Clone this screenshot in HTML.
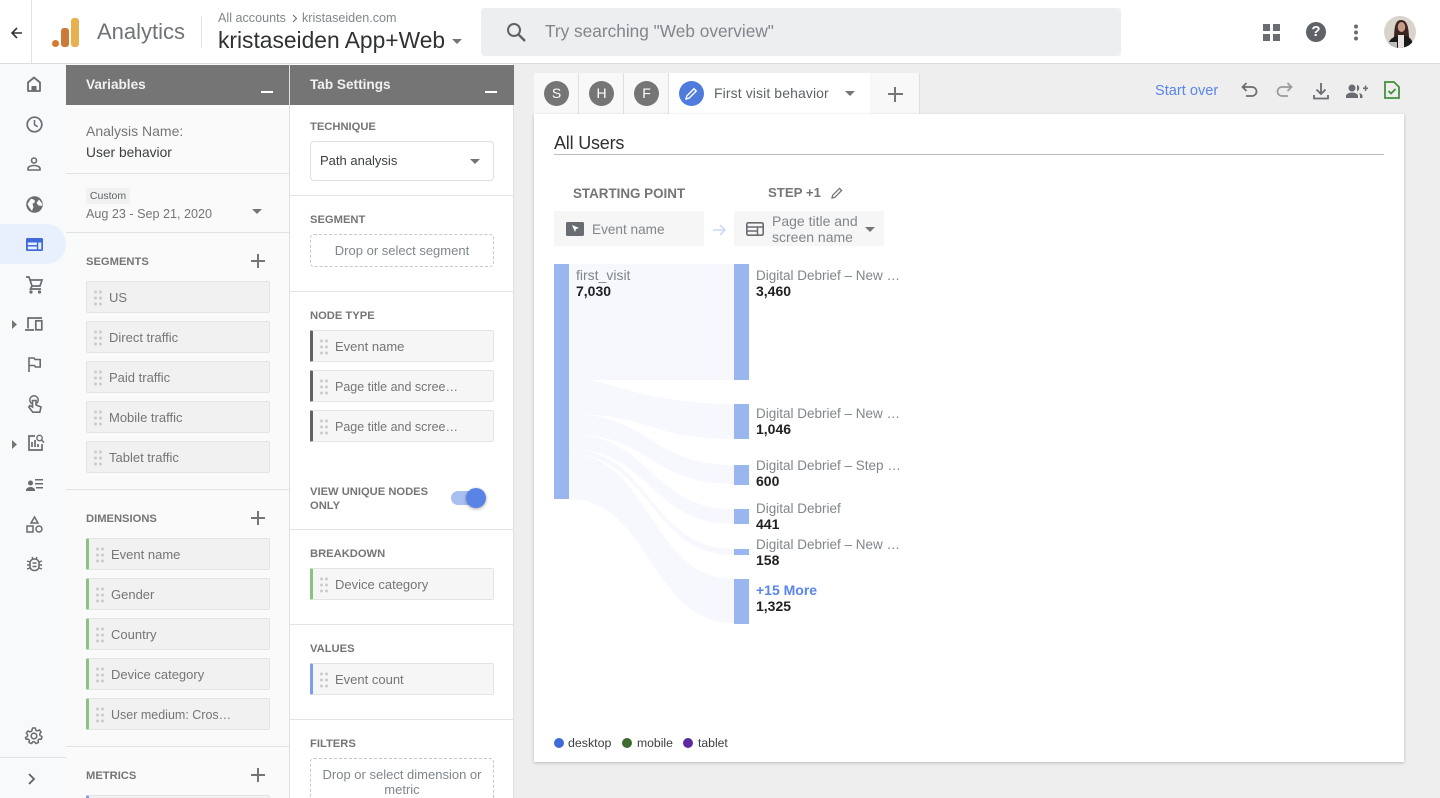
<!DOCTYPE html>
<html><head><meta charset="utf-8"><style>
*{box-sizing:border-box}
html,body{margin:0;padding:0;width:1440px;height:798px;overflow:hidden;background:#eee;font-family:"Liberation Sans",sans-serif;color:#757575}
#root{position:relative;width:1440px;height:798px;overflow:hidden;background:#eee}
.a{position:absolute;white-space:nowrap}
.t{position:absolute;white-space:nowrap;font-size:14px;line-height:16px}
.lab{position:absolute;white-space:nowrap;font-size:11.2px;line-height:14px;font-weight:700;color:#757575;margin-top:1px}
.chip{position:absolute;width:184px;height:32px;background:#f1f1f1;border:1px solid #e4e4e4;border-radius:2px;font-size:13px;line-height:32px;color:#757575;padding-left:22px;white-space:nowrap}
.chip.w{background:#f6f6f6}
.chip.e{font-size:12.5px}
.chip i{position:absolute;left:7px;top:7px;width:8px;height:17px;background-image:radial-gradient(circle,#cdcdcd 1.4px,transparent 1.7px);background-size:5px 6px;background-position:-1px 0}
.chip.g,.chip.d,.chip.b{border-left:3px solid #8bc27f;padding-left:22px}
.chip.d{border-left-color:#5f6368}
.chip.b{border-left-color:#7c9df0}
.hr{position:absolute;height:1px;background:#e3e3e3}
svg{position:absolute;overflow:visible}
.plus{position:absolute;width:14px;height:14px}
.plus:before,.plus:after{content:"";position:absolute;background:#757575}
.plus:before{left:0;right:0;top:6px;height:2px}
.plus:after{top:0;bottom:0;left:6px;width:2px}
.car{position:absolute;width:0;height:0;border-left:5px solid transparent;border-right:5px solid transparent;border-top:5px solid #757575}
.tab{position:absolute;top:73px;height:41px;background:#f8f8f8;border-right:1px solid #e0e0e0}
.circ{position:absolute;top:81px;width:25px;height:25px;border-radius:50%;background:#757575;color:#fff;font-size:14px;line-height:25px;text-align:center}
.nm{position:absolute;left:756px;font-size:13.5px;line-height:16px;color:#80868b;white-space:nowrap;margin-top:1px}
.v{position:absolute;left:756px;font-size:14px;line-height:16px;font-weight:700;color:#212121;white-space:nowrap}
.dot{position:absolute;top:738px;width:10px;height:10px;border-radius:50%}
</style></head><body><div id="root">

<!-- header -->
<div class="a" style="left:0;top:0;width:1440px;height:64px;background:#fff;border-bottom:1px solid #dcdcdc"></div>
<div class="a" style="left:31px;top:0;width:1px;height:63px;background:#e2e2e2"></div>
<svg style="left:10px;top:26px" width="14" height="14" viewBox="0 0 14 14"><path d="M12 7H2.500M7 2L2 7l5 5" fill="none" stroke="#333" stroke-width="1.600"/></svg>
<svg style="left:52px;top:18px" width="27" height="29" viewBox="0 0 27 29"><circle cx="3.500" cy="25.500" r="3.500" fill="#d9772e"/><rect x="9" y="10" width="8" height="19" rx="3" fill="#cc7a38"/><rect x="19" y="0" width="8" height="29" rx="3" fill="#e9b04f"/></svg>
<div class="a" style="left:97px;top:18px;font-size:22px;line-height:28px;color:#6f7378">Analytics</div>
<div class="a" style="left:201px;top:16px;width:1px;height:32px;background:#e2e2e2"></div>
<div class="a" style="left:218px;top:11px;font-size:12.6px;line-height:14px;color:#80868b">All accounts</div>
<svg style="left:291px;top:14px" width="8" height="9" viewBox="0 0 8 9"><path d="M2 1l3.500 3.500L2 8" fill="none" stroke="#757575" stroke-width="1.200"/></svg>
<div class="a" style="left:302px;top:11px;font-size:12.6px;line-height:14px;color:#80868b">kristaseiden.com</div>
<div class="a" style="left:218px;top:27px;font-size:22.8px;line-height:26px;color:#2f3133">kristaseiden App+Web</div>
<div class="car" style="left:452px;top:39px"></div>

<div class="a" style="left:481px;top:8px;width:640px;height:48px;background:#eceef0;border-radius:4px"></div>
<svg style="left:505px;top:21px" width="22" height="22" viewBox="0 0 22 22"><circle cx="9" cy="9" r="6" fill="none" stroke="#5f6368" stroke-width="2"/><path d="M13.500 13.500L20 20" stroke="#5f6368" stroke-width="2.400"/></svg>
<div class="a" style="left:545px;top:21px;font-size:17.25px;line-height:20px;color:#80868b">Try searching "Web overview"</div>

<svg style="left:1263px;top:24px" width="17" height="17" viewBox="0 0 17 17" fill="#696c70"><rect width="7" height="7"/><rect x="10" width="7" height="7"/><rect y="10" width="7" height="7"/><rect x="10" y="10" width="7" height="7"/></svg>
<div class="a" style="left:1306px;top:22px;width:20px;height:20px;border-radius:50%;background:#5f6368;color:#fff;font-weight:700;font-size:15px;line-height:20px;text-align:center">?</div>
<svg style="left:1353px;top:24px" width="6" height="17" viewBox="0 0 6 17" fill="#696c70"><circle cx="3" cy="2.500" r="2"/><circle cx="3" cy="8.500" r="2"/><circle cx="3" cy="14.500" r="2"/></svg>
<svg style="left:1384px;top:16px" width="32" height="32" viewBox="0 0 32 32"><defs><clipPath id="c"><circle cx="16" cy="16" r="16"/></clipPath></defs><g clip-path="url(#c)"><rect width="32" height="32" fill="#d9d3cc"/><path d="M10 25C10 12 11 4 17 4s8 7 8 20z" fill="#3a2420"/><ellipse cx="17.500" cy="11" rx="3.800" ry="5" fill="#c99b87"/><path d="M4 32c0-8 4-11 10-12h7c6 1 8 5 8 12z" fill="#1d1a1b"/><path d="M14 19h6v13h-6z" fill="#e8e2e0"/><path d="M4 26h9v6H4z" fill="#bdbdbd"/></g></svg>

<!-- left nav -->
<div class="a" style="left:0;top:64px;width:66px;height:734px;background:#f8f9fb"></div>
<div class="a" style="left:0;top:224px;width:66px;height:40px;background:#e8effd;border-radius:0 20px 20px 0"></div>
<div class="a" style="left:0;top:757px;width:66px;height:1px;background:#e3e3e3"></div>

<svg style="left:26px;top:76px" width="16" height="16" viewBox="0 0 16 16"><path d="M2 15V6.500L8 1.500l6 5V15z" fill="none" stroke="#696c70" stroke-width="1.800" stroke-linejoin="round"/><path d="M5.500 15v-5h5v5z" fill="#696c70"/></svg>
<svg style="left:26px;top:116px" width="17" height="17" viewBox="0 0 17 17"><circle cx="8.500" cy="8.500" r="7.300" fill="none" stroke="#696c70" stroke-width="1.700"/><path d="M8.500 4v4.800l3.200 2" fill="none" stroke="#696c70" stroke-width="1.500"/></svg>
<svg style="left:27px;top:157px" width="14" height="14" viewBox="0 0 14 14"><circle cx="7" cy="3.500" r="2.500" fill="none" stroke="#696c70" stroke-width="1.600"/><path d="M1 13v-1.500c0-2 3.500-3 6-3s6 1 6 3V13z" fill="none" stroke="#696c70" stroke-width="1.600"/></svg>
<svg style="left:26px;top:196px" width="17" height="17" viewBox="0 0 17 17"><circle cx="8.500" cy="8.500" r="8.300" fill="#696c70"/><path d="M5 2.500l3.500 1.500L9 6 6.500 8l1 3L6 15 3 11 1.500 8zM13 3.500L10.500 7l2 2.500 3 .5 1-2z" fill="#f8f9fb"/></svg>
<svg style="left:26px;top:238px" width="17" height="13" viewBox="0 0 17 13"><rect width="17" height="13" rx="1.500" fill="#3f6ad8"/><rect x="1.800" y="4.500" width="9" height="2.500" fill="#e8effd"/><rect x="1.800" y="8.500" width="9" height="2.800" fill="#e8effd"/><rect x="12.300" y="4.500" width="3" height="6.800" fill="#e8effd"/></svg>
<svg style="left:25px;top:276px" width="18" height="18" viewBox="0 0 18 18"><path d="M1 1h3l3 9h8l2-6H5" fill="none" stroke="#696c70" stroke-width="1.700"/><path d="M7 10l-1.500 3H16" fill="none" stroke="#696c70" stroke-width="1.700"/><circle cx="6" cy="16" r="1.600" fill="#696c70"/><circle cx="14.500" cy="16" r="1.600" fill="#696c70"/></svg>
<svg style="left:12px;top:320px" width="5" height="9" viewBox="0 0 5 9"><path d="M0 0l5 4.500L0 9z" fill="#757575"/></svg>
<svg style="left:25px;top:317px" width="18" height="14" viewBox="0 0 18 14"><path d="M3 11.500V1h14M0 13h9" fill="none" stroke="#696c70" stroke-width="1.700"/><rect x="10.800" y="3.800" width="6" height="9" fill="none" stroke="#696c70" stroke-width="1.700"/></svg>
<svg style="left:28px;top:357px" width="13" height="15" viewBox="0 0 13 15"><path d="M1 15V1h5l1 1.500h5.200v7.500H7.500l-1-1.500H1" fill="none" stroke="#696c70" stroke-width="1.600"/></svg>
<svg style="left:28px;top:395px" width="14" height="18" viewBox="0 0 14 18"><circle cx="6" cy="5" r="4.200" fill="none" stroke="#696c70" stroke-width="1.500"/><path d="M4.500 5.500v6.500L2 10.500.8 12l4 5.200h7l1.200-5.200-5-2V5.500z" fill="#f8f9fb" stroke="#696c70" stroke-width="1.600"/></svg>
<svg style="left:12px;top:440px" width="5" height="9" viewBox="0 0 5 9"><path d="M0 0l5 4.500L0 9z" fill="#757575"/></svg>
<svg style="left:27px;top:434px" width="18" height="18" viewBox="0 0 18 18"><path d="M8 2H2v14h13v-6" fill="none" stroke="#696c70" stroke-width="1.700"/><path d="M5 13V8M8 13V6M11 13v-3" stroke="#696c70" stroke-width="1.700"/><circle cx="12.500" cy="4" r="2.700" fill="none" stroke="#696c70" stroke-width="1.400"/><path d="M14.500 6l2.500 2.500" stroke="#696c70" stroke-width="1.500"/></svg>
<svg style="left:26px;top:478px" width="17" height="13" viewBox="0 0 17 13" fill="#696c70"><circle cx="4.500" cy="5" r="2.500"/><path d="M0 13v-1c0-2 3-3 4.500-3S9 10 9 12v1z"/><path d="M9 1h8v1.500H9zM9 5h8v1.500H9zM10 9h7v1.500h-7z"/></svg>
<svg style="left:26px;top:516px" width="17" height="17" viewBox="0 0 17 17"><path d="M8.500 1L12 7H5z" fill="none" stroke="#696c70" stroke-width="1.500"/><rect x="1" y="10" width="6" height="6" fill="none" stroke="#696c70" stroke-width="1.500"/><circle cx="13" cy="13" r="3" fill="none" stroke="#696c70" stroke-width="1.500"/></svg>
<svg style="left:27px;top:556px" width="15" height="16" viewBox="0 0 15 16"><rect x="3" y="3" width="9" height="11.500" rx="4" fill="none" stroke="#696c70" stroke-width="1.600"/><path d="M0 5l3 1M15 5l-3 1M0 9h3M15 9h-3M0 13l3-1M15 13l-3-1M5 1l1 2M10 1L9 3M5.500 7h4M5.500 10.500h4" stroke="#696c70" stroke-width="1.400"/></svg>
<svg style="left:25px;top:727px" width="18" height="18" viewBox="0 0 18 18"><circle cx="9" cy="9" r="2.800" fill="none" stroke="#696c70" stroke-width="1.600"/><path d="M7.600 1h2.800l.4 2.200 1.500.7 2-1 1.800 2.200-1.400 1.700.3 1.700 2 1-.7 2.700-2.200-.1-1.100 1.300.4 2.200-2.600 1-1.300-1.800h-1.600l-1.300 1.800-2.600-1 .4-2.200-1.100-1.300-2.200.1L.4 10.500l2-1 .3-1.700L1.300 6.100l1.800-2.200 2 1 1.500-.7z" fill="none" stroke="#696c70" stroke-width="1.500" stroke-linejoin="round"/></svg>
<svg style="left:28px;top:773px" width="8" height="12" viewBox="0 0 8 12"><path d="M1 1l5 5-5 5" fill="none" stroke="#5f6368" stroke-width="1.800"/></svg>

<!-- variables panel -->
<div class="a" style="left:66px;top:64px;width:224px;height:734px;background:#fafafa;border-right:1px solid #e0e0e0"></div>
<div class="a" style="left:66px;top:65px;width:223px;height:40px;background:#757575;color:#f1f1f1;font-size:13.6px;font-weight:700;line-height:39px;padding-left:20px">Variables</div>
<div class="a" style="left:261px;top:91px;width:12px;height:2px;background:#fff"></div>
<div class="t" style="left:86px;top:123px;color:#757575">Analysis Name:</div>
<div class="t" style="left:86px;top:145px;color:#3c4043;font-size:13.8px">User behavior</div>
<div class="hr" style="left:66px;top:173px;width:223px"></div>
<div class="a" style="left:86px;top:188px;width:44px;height:16px;background:#f1f1f1;font-size:10.5px;line-height:16px;color:#5f6368;text-align:center">Custom</div>
<div class="t" style="left:86px;top:206px;color:#757575;font-size:12.6px">Aug 23 - Sep 21, 2020</div>
<div class="car" style="left:252px;top:209px"></div>
<div class="hr" style="left:66px;top:232px;width:223px"></div>
<div class="lab" style="left:86px;top:254px">SEGMENTS</div>
<div class="plus" style="left:251px;top:254px"></div>
<div class="chip" style="left:86px;top:281px"><i></i>US</div>
<div class="chip" style="left:86px;top:321px"><i></i>Direct traffic</div>
<div class="chip" style="left:86px;top:361px"><i></i>Paid traffic</div>
<div class="chip" style="left:86px;top:401px"><i></i>Mobile traffic</div>
<div class="chip" style="left:86px;top:441px"><i></i>Tablet traffic</div>
<div class="hr" style="left:66px;top:489px;width:223px"></div>
<div class="lab" style="left:86px;top:511px">DIMENSIONS</div>
<div class="plus" style="left:251px;top:511px"></div>
<div class="chip g" style="left:86px;top:538px"><i></i>Event name</div>
<div class="chip g" style="left:86px;top:578px"><i></i>Gender</div>
<div class="chip g" style="left:86px;top:618px"><i></i>Country</div>
<div class="chip g" style="left:86px;top:658px"><i></i>Device category</div>
<div class="chip g e" style="left:86px;top:698px"><i></i>User medium: Cros…</div>
<div class="hr" style="left:66px;top:746px;width:223px"></div>
<div class="lab" style="left:86px;top:768px">METRICS</div>
<div class="plus" style="left:251px;top:768px"></div>
<div class="chip b" style="left:86px;top:795px"></div>

<!-- tab settings panel -->
<div class="a" style="left:290px;top:64px;width:224px;height:734px;background:#fff;border-right:1px solid #e0e0e0"></div>
<div class="a" style="left:290px;top:65px;width:224px;height:40px;background:#757575;color:#f1f1f1;font-size:13.6px;font-weight:700;line-height:39px;padding-left:20px">Tab Settings</div>
<div class="a" style="left:485px;top:91px;width:12px;height:2px;background:#fff"></div>
<div class="lab" style="left:310px;top:119px">TECHNIQUE</div>
<div class="a" style="left:310px;top:141px;width:184px;height:40px;border:1px solid #e0e0e0;border-radius:4px;font-size:13px;line-height:37px;padding-left:9px;color:#3c4043">Path analysis</div>
<div class="car" style="left:470px;top:159px"></div>
<div class="hr" style="left:290px;top:195px;width:223px"></div>
<div class="lab" style="left:310px;top:212px">SEGMENT</div>
<div class="a" style="left:310px;top:234px;width:184px;height:33px;border:1px dashed #c8c8c8;border-radius:4px;font-size:13px;line-height:31px;text-align:center;color:#80868b">Drop or select segment</div>
<div class="hr" style="left:290px;top:291px;width:223px"></div>
<div class="lab" style="left:310px;top:308px">NODE TYPE</div>
<div class="chip w d" style="left:310px;top:330px"><i></i>Event name</div>
<div class="chip w d e" style="left:310px;top:370px"><i></i>Page title and scree…</div>
<div class="chip w d e" style="left:310px;top:410px"><i></i>Page title and scree…</div>
<div class="lab" style="left:310px;top:484px">VIEW UNIQUE NODES</div>
<div class="lab" style="left:310px;top:498px">ONLY</div>
<div class="a" style="left:451px;top:491px;width:34px;height:14px;border-radius:7px;background:#a9bff2"></div>
<div class="a" style="left:466px;top:488px;width:20px;height:20px;border-radius:50%;background:#5a83e6;box-shadow:0 1px 3px rgba(0,0,0,.35)"></div>
<div class="hr" style="left:290px;top:529px;width:223px"></div>
<div class="lab" style="left:310px;top:546px">BREAKDOWN</div>
<div class="chip w g" style="left:310px;top:568px"><i></i>Device category</div>
<div class="hr" style="left:290px;top:624px;width:223px"></div>
<div class="lab" style="left:310px;top:641px">VALUES</div>
<div class="chip w b" style="left:310px;top:663px"><i></i>Event count</div>
<div class="hr" style="left:290px;top:719px;width:223px"></div>
<div class="lab" style="left:310px;top:736px">FILTERS</div>
<div class="a" style="left:310px;top:758px;width:184px;height:60px;border:1px dashed #c8c8c8;border-radius:4px;font-size:13px;line-height:15px;text-align:center;color:#80868b;padding-top:8px;white-space:normal">Drop or select dimension or metric</div>

<!-- tabs -->
<div class="tab" style="left:534px;width:45px"></div>
<div class="tab" style="left:579px;width:45px"></div>
<div class="tab" style="left:624px;width:45px"></div>
<div class="tab" style="left:870px;width:50px"></div>
<div class="circ" style="left:544px">S</div>
<div class="circ" style="left:589px">H</div>
<div class="circ" style="left:634px">F</div>
<div class="a" style="left:669px;top:73px;width:201px;height:42px;background:#fff"></div>
<div class="circ" style="left:679px;background:#4f7bdc"></div>
<svg style="left:685px;top:87px" width="13" height="13" viewBox="0 0 13 13"><path d="M1 12l.8-3L9 1.800 11.200 4 4 11.200z" fill="none" stroke="#fff" stroke-width="1.400"/></svg>
<div class="a" style="left:714px;top:85px;font-size:14px;line-height:16px;font-weight:400;color:#5f6368;letter-spacing:.1px">First visit behavior</div>
<div class="car" style="left:845px;top:91px"></div>
<div class="plus" style="left:888px;top:87px;width:15px;height:15px"></div>

<!-- toolbar -->
<div class="a" style="left:1155px;top:83px;font-size:14.6px;line-height:16px;color:#5a85ea">Start over</div>
<svg style="left:1241px;top:82px" width="17" height="16" viewBox="0 0 17 16"><path d="M5.500 1L1.500 5l4 4M2 5h9a4.500 4.500 0 0 1 0 9H5" fill="none" stroke="#696c70" stroke-width="1.700"/></svg>
<svg style="left:1276px;top:82px" width="17" height="16" viewBox="0 0 17 16"><path d="M11.500 1l4 4-4 4M15 5H6a4.500 4.500 0 0 0 0 9h6" fill="none" stroke="#9a9a9a" stroke-width="1.700"/></svg>
<svg style="left:1313px;top:83px" width="16" height="17" viewBox="0 0 16 17"><path d="M8 0v11M3.500 6.500L8 11l4.500-4.500M1 12v3.500h14V12" fill="none" stroke="#696c70" stroke-width="1.800"/></svg>
<svg style="left:1346px;top:84px" width="22" height="14" viewBox="0 0 22 14" fill="#696c70"><circle cx="6" cy="4" r="3.500"/><path d="M0 14v-2c0-2 3-3.500 6-3.500s6 1.500 6 3.500v2z"/><path d="M11 .8a3.500 3.500 0 0 1 0 6.500zM13 9c2 .5 3.500 1.500 3.500 3v2H14v-2c0-1-.3-2-1-3z"/><path d="M17 3.500h5v1.500h-5zM18.800 1.500h1.500v5.500h-1.500z"/></svg>
<svg style="left:1384px;top:81px" width="16" height="18" viewBox="0 0 16 18"><path d="M1 1h9l5 5v11H1z" fill="none" stroke="#43903f" stroke-width="1.800"/><path d="M4.500 10l2.500 2.500 4.500-4.500" fill="none" stroke="#43903f" stroke-width="1.800"/></svg>

<!-- card -->
<div class="a" style="left:534px;top:114px;width:870px;height:648px;background:#fff;box-shadow:0 1px 3px rgba(0,0,0,.22)"></div>
<div class="a" style="left:554px;top:132px;font-size:18px;line-height:22px;color:#2f3133;letter-spacing:-.2px">All Users</div>
<div class="a" style="left:554px;top:154px;width:830px;height:1px;background:#bdbdbd"></div>
<div class="a" style="left:573px;top:186px;font-size:13.4px;line-height:16px;font-weight:700;color:#757575">STARTING POINT</div>
<div class="a" style="left:768px;top:185px;font-size:13.2px;line-height:16px;font-weight:700;color:#757575">STEP +1</div>
<svg style="left:831px;top:187px" width="12" height="12" viewBox="0 0 12 12"><path d="M1 11l.6-2.700L8.500 1.400 10.600 3.500 3.700 10.400z" fill="none" stroke="#757575" stroke-width="1.300"/></svg>
<div class="a" style="left:554px;top:211px;width:150px;height:35px;background:#f6f6f6"></div>
<svg style="left:566px;top:222px" width="18" height="14" viewBox="0 0 18 14"><rect width="18" height="14" rx="1.500" fill="#696c70"/><path d="M6 3l7 3-3 1-1 3z" fill="#fff"/></svg>
<div class="t" style="left:592px;top:222px;color:#80868b;font-size:13.6px">Event name</div>
<svg style="left:713px;top:224px" width="13" height="12" viewBox="0 0 13 12"><path d="M0 6h11.500M7 1l5 5-5 5" fill="none" stroke="#c9d7f8" stroke-width="1.500"/></svg>
<div class="a" style="left:734px;top:211px;width:150px;height:35px;background:#f6f6f6"></div>
<svg style="left:746px;top:222px" width="18" height="14" viewBox="0 0 18 14"><rect x=".8" y=".8" width="16.400" height="12.400" rx="1.500" fill="none" stroke="#696c70" stroke-width="1.600"/><path d="M1 5h16M1 9h10M11.500 5v8" stroke="#696c70" stroke-width="1.500" fill="none"/></svg>
<div class="t" style="left:772px;top:213px;color:#80868b">Page title and</div>
<div class="t" style="left:772px;top:229px;color:#80868b">screen name</div>
<div class="car" style="left:865px;top:227px"></div>

<!-- sankey -->
<svg style="left:0;top:0" width="1440" height="798" viewBox="0 0 1440 798">
<g fill="#f6f8fe">
<path d="M569 264H734V380H569z"/>
<path d="M569 378C610 378 640 404 734 404V439C650 439 650 414 569 414z"/>
<path d="M569 414C650 414 650 465 734 465V484C650 484 650 434 569 434z"/>
<path d="M569 434C650 434 650 509 734 509V524C650 524 650 449 569 449z"/>
<path d="M569 449C650 449 650 549 734 549V555C650 555 650 454 569 454z"/>
<path d="M569 454C650 454 650 579 734 579V623C650 623 650 499 569 499z"/>
</g>
<g fill="#9ab6ee">
<rect x="554" y="264" width="15" height="235"/>
<rect x="734" y="264" width="15" height="116"/>
<rect x="734" y="404" width="15" height="35"/>
<rect x="734" y="465" width="15" height="20"/>
<rect x="734" y="509" width="15" height="15"/>
<rect x="734" y="549" width="15" height="6"/>
<rect x="734" y="579" width="15" height="45"/>
</g>
</svg>
<div class="t" style="left:576px;top:267px;color:#80868b">first_visit</div>
<div class="t" style="left:576px;top:283px;color:#212121;font-weight:700">7,030</div>
<div class="nm" style="top:267px">Digital Debrief – New …</div><div class="v" style="top:283px">3,460</div>
<div class="nm" style="top:405px">Digital Debrief – New …</div><div class="v" style="top:421px">1,046</div>
<div class="nm" style="top:457px">Digital Debrief – Step …</div><div class="v" style="top:473px">600</div>
<div class="nm" style="top:500px">Digital Debrief</div><div class="v" style="top:516px">441</div>
<div class="nm" style="top:536px">Digital Debrief – New …</div><div class="v" style="top:552px">158</div>
<div class="nm" style="top:581px;color:#5a85ea;font-weight:700;font-size:14px">+15 More</div><div class="v" style="top:598px">1,325</div>

<div class="dot" style="left:554px;background:#3d6ad6"></div><div class="a" style="left:568px;top:736px;font-size:12.4px;line-height:14px;color:#3c4043">desktop</div>
<div class="dot" style="left:622px;background:#3f6b2f"></div><div class="a" style="left:637px;top:736px;font-size:12.2px;line-height:14px;color:#3c4043">mobile</div>
<div class="dot" style="left:683px;background:#5e2a9e"></div><div class="a" style="left:698px;top:736px;font-size:12.2px;line-height:14px;color:#3c4043">tablet</div>

</div></body></html>
